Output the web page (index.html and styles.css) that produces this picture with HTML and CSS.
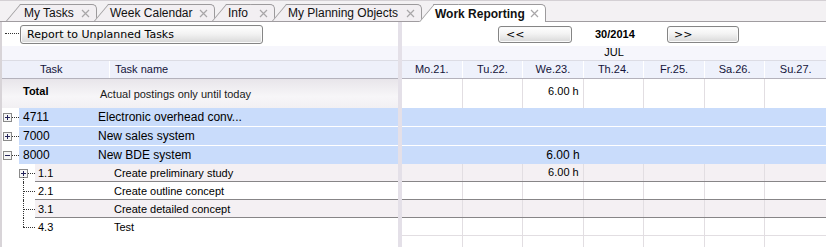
FILE: index.html
```html
<!DOCTYPE html>
<html lang="en">
<head>
    <meta charset="UTF-8">
    <title>Work Reporting</title>
    <link rel="stylesheet" href="styles.css">
</head>
<body>

<div class="tabs">
    <div class="tab tab-1">My Tasks <svg class="x" width="9" height="9" viewBox="0 0 9 9"><path d="M1 1l7 7M8 1l-7 7"/></svg></div>
    <div class="tab tab-2">Week Calendar <svg class="x" width="9" height="9" viewBox="0 0 9 9"><path d="M1 1l7 7M8 1l-7 7"/></svg></div>
    <div class="tab tab-3">Info <svg class="x" width="9" height="9" viewBox="0 0 9 9"><path d="M1 1l7 7M8 1l-7 7"/></svg></div>
    <div class="tab tab-4">My Planning Objects <svg class="x" width="9" height="9" viewBox="0 0 9 9"><path d="M1 1l7 7M8 1l-7 7"/></svg></div>
    <div class="tab tab-5 active">Work Reporting <svg class="x" width="9" height="9" viewBox="0 0 9 9"><path d="M1 1l7 7M8 1l-7 7"/></svg></div>
</div>

<div class="view">
    <!-- left: task tree -->
    <div class="pane-left">
        <div class="bar-row">
            <span class="dots-h"></span>
            <button class="btn btn-report">Report to Unplanned Tasks</button>
        </div>
        <div class="band"></div>
        <div class="head-row">
            <div class="hc hc-task">Task</div>
            <div class="hc hc-name">Task name</div>
        </div>
        <div class="total-row">
            <div class="tot-id">Total</div>
            <div class="tot-name">Actual postings only until today</div>
        </div>

        <div class="tops">
            <div class="trow">
                <div class="gutter">
                    <svg class="exp" width="9" height="9" viewBox="0 0 9 9"><rect x="0.5" y="0.5" width="8" height="8"/><path d="M2 4.5h5M4.5 2v5"/></svg>
                    <span class="dots"></span>
                </div>
                <div class="trow-body"><span class="t-id">4711</span><span>Electronic overhead conv...</span></div>
            </div>
            <div class="trow">
                <div class="gutter">
                    <svg class="exp" width="9" height="9" viewBox="0 0 9 9"><rect x="0.5" y="0.5" width="8" height="8"/><path d="M2 4.5h5M4.5 2v5"/></svg>
                    <span class="dots"></span>
                </div>
                <div class="trow-body"><span class="t-id">7000</span><span>New sales system</span></div>
            </div>
            <div class="trow">
                <div class="gutter">
                    <svg class="exp" width="9" height="9" viewBox="0 0 9 9"><rect x="0.5" y="0.5" width="8" height="8"/><path d="M2 4.5h5"/></svg>
                    <span class="dots"></span>
                </div>
                <div class="trow-body"><span class="t-id">8000</span><span>New BDE system</span></div>
            </div>
        </div>

        <div class="subs">
            <div class="srow first alt">
                <div class="sgutter">
                    <svg class="exp" width="9" height="9" viewBox="0 0 9 9"><rect x="0.5" y="0.5" width="8" height="8"/><path d="M2 4.5h5M4.5 2v5"/></svg>
                    <span class="dots"></span>
                </div>
                <div class="srow-body"><span class="s-id">1.1</span><span>Create preliminary study</span></div>
            </div>
            <div class="srow mid">
                <div class="sgutter"><span class="branch"></span></div>
                <div class="srow-body"><span class="s-id">2.1</span><span>Create outline concept</span></div>
            </div>
            <div class="srow mid alt">
                <div class="sgutter"><span class="branch"></span></div>
                <div class="srow-body"><span class="s-id">3.1</span><span>Create detailed concept</span></div>
            </div>
            <div class="srow last">
                <div class="sgutter"><span class="branch"></span></div>
                <div class="srow-body"><span class="s-id">4.3</span><span>Test</span></div>
            </div>
        </div>
    </div>

    <div class="splitter"></div>

    <!-- right: week grid -->
    <div class="pane-right">
        <div class="nav-row">
            <button class="btn nav-btn">&lt;&lt;</button>
            <div class="week">30/2014</div>
            <button class="btn nav-btn next">&gt;&gt;</button>
        </div>
        <div class="month-row">JUL</div>
        <div class="days day-head">
            <div>Mo.21.</div><div>Tu.22.</div><div>We.23.</div><div>Th.24.</div><div>Fr.25.</div><div>Sa.26.</div><div>Su.27.</div>
        </div>
        <div class="days day-total">
            <div></div><div></div><div class="hours">6.00 h</div><div></div><div></div><div></div><div></div>
        </div>
        <div class="blues">
            <div class="days day-blue"><div></div><div></div><div></div><div></div><div></div><div></div><div></div></div>
            <div class="days day-blue"><div></div><div></div><div></div><div></div><div></div><div></div><div></div></div>
            <div class="days day-blue"><div></div><div></div><div class="hours">6.00 h</div><div></div><div></div><div></div><div></div></div>
        </div>
        <div class="days day-sub alt"><div></div><div></div><div class="hours">6.00 h</div><div></div><div></div><div></div><div></div></div>
        <div class="days day-sub"><div></div><div></div><div></div><div></div><div></div><div></div><div></div></div>
        <div class="days day-sub alt"><div></div><div></div><div></div><div></div><div></div><div></div><div></div></div>
        <div class="days day-sub last"><div></div><div></div><div></div><div></div><div></div><div></div><div></div></div>
        <div class="days day-empty"><div></div><div></div><div></div><div></div><div></div><div></div><div></div></div>
    </div>
</div>

</body>
</html>
```

FILE: styles.css
```css
* {
    box-sizing: border-box;
}
body {
    margin: 0;
    width: 826px;
    height: 247px;
    overflow: hidden;
    background: #fff;
    font-family: "Liberation Sans", Arial, sans-serif;
    color: #000;
}

/* tab strip */
.tabs {
    display: flex;
    align-items: flex-end;
    height: 22px;
    padding-left: 20px;
    background: #f3f1f3;
    border-top: 1px solid #d4d0d4;
    border-bottom: 1px solid #a09ca0;
}
.tab {
    position: relative;
    z-index: 0;
    display: flex;
    align-items: center;
    height: 17px;
    margin-left: 11px;
    padding: 0 6px 0 2px;
    border-top: 1px solid #9c9a9c;
    border-right: 1px solid #9c9a9c;
    border-top-right-radius: 5px;
    background: #f2eff2;
    font-size: 12px;
    color: #111;
    white-space: nowrap;
}
.tab::before {
    content: "";
    position: absolute;
    z-index: -1;
    top: -1px;
    bottom: 0;
    left: -14px;
    width: 24px;
    border-left: 1px solid #9c9a9c;
    border-top: 1px solid #9c9a9c;
    background: inherit;
    transform: skewX(-40deg);
    transform-origin: 0 100%;
}
.tab-1 { width: 77px; margin-left: 0; padding-left: 4px; }
.tab-2 { width: 107px; }
.tab-3 { width: 49px; }
.tab-4 { width: 136px; }
.tab-5 { width: 113px; }
.tab.active {
    height: 18px;
    margin-bottom: -1px;
    background: #fff;
    font-weight: bold;
}
.tab .x {
    margin-left: auto;
    fill: none;
    stroke: #a8a6a8;
    stroke-width: 1.2;
}

/* panes */
.view {
    display: flex;
    height: 225px;
}
.pane-left {
    width: 398px;
    border-left: 2px solid #d8d4d8;
}
.splitter {
    width: 4px;
    background: #e4e0e8;
}
.pane-right {
    flex: 1;
    display: flex;
    flex-direction: column;
}

/* buttons */
.btn {
    font-family: "DejaVu Sans", Verdana, sans-serif;
    font-size: 11px;
    color: #000;
    text-align: left;
    border: 1px solid #858585;
    border-radius: 3px;
    background: linear-gradient(#ffffff, #f3f3f3 45%, #e2e2e2 80%, #d6d6d6);
    box-shadow: inset 0 0 0 1px #fafafa;
    padding: 0;
}

/* left pane rows */
.bar-row {
    display: flex;
    align-items: center;
    height: 24px;
    padding-left: 3px;
}
.dots-h {
    width: 14px;
    border-top: 1px dotted #333;
    margin-top: -1px;
}
.btn-report {
    width: 243px;
    height: 19px;
    margin-left: 1px;
    padding-left: 6px;
}
.band {
    height: 14px;
    background: #f6f6fc;
}
.head-row {
    display: flex;
    height: 19px;
    border-top: 1px solid #dcdce4;
    border-bottom: 1px solid #b4b2bc;
    background: #eef0fa;
    font-size: 11px;
    color: #14143a;
}
.hc {
    line-height: 17px;
}
.hc-task {
    width: 108px;
    padding-left: 38px;
    border-right: 1px solid #fff;
}
.hc-name {
    flex: 1;
    padding-left: 5px;
}
.total-row {
    display: flex;
    height: 29px;
    background: linear-gradient(#e8e5ea, #f7f6f8 60%, #f2f0f3);
    font-size: 11px;
    line-height: 13px;
}
.tot-id {
    width: 98px;
    padding: 6px 0 0 21px;
    font-weight: bold;
}
.tot-name {
    padding-top: 9px;
    color: #1a1a1a;
}

.trow {
    display: flex;
    height: 19px;
}
.tops .trow:last-child {
    height: 18px;
}
.gutter {
    display: flex;
    align-items: center;
    width: 17px;
    padding-left: 1px;
}
.dots {
    flex: 1;
    border-top: 1px dotted #333;
}
.exp {
    display: block;
    flex: none;
}
.exp rect {
    fill: #f6f6f6;
    stroke: #8a8a8a;
}
.exp path {
    stroke: #23235a;
}
.trow-body {
    flex: 1;
    display: flex;
    align-items: center;
    height: 18px;
    padding-left: 4px;
    background: #c9dcfb;
    font-size: 12px;
}
.t-id {
    width: 75px;
}

.srow {
    display: flex;
    height: 18px;
}
.sgutter {
    position: relative;
    display: flex;
    align-items: center;
    width: 33px;
    padding-left: 17px;
}
.sgutter::before {
    content: "";
    position: absolute;
    left: 21px;
    top: 0;
    bottom: 0;
    border-left: 1px dotted #333;
}
.srow.first .sgutter::before {
    top: 13px;
}
.srow.last .sgutter::before {
    bottom: 9px;
}
.branch {
    flex: 1;
    margin-left: 4px;
    border-top: 1px dotted #333;
}
.srow-body {
    flex: 1;
    display: flex;
    align-items: center;
    padding-left: 3px;
    border-bottom: 1px solid #878587;
    font-size: 11px;
}
.srow.alt .srow-body {
    background: #f4f0f3;
}
.srow.last .srow-body {
    border-bottom: none;
}
.s-id {
    width: 76px;
}

/* right pane rows */
.nav-row {
    display: flex;
    align-items: center;
    height: 24px;
    padding-left: 96px;
}
.nav-btn {
    width: 74px;
    height: 17px;
    padding-left: 7px;
}
.nav-btn.next {
    width: 72px;
    padding-left: 6px;
}
.week {
    width: 95px;
    padding-left: 23px;
    font-size: 11px;
    font-weight: bold;
}
.month-row {
    height: 14px;
    line-height: 12px;
    background: #f6f6fc;
    text-align: center;
    font-size: 11px;
}
.days {
    display: grid;
    grid-template-columns: repeat(7, 1fr);
    font-size: 11px;
}
.days > div {
    border-right: 1px solid #e2dee2;
}
.days > div:last-child {
    border-right: none;
}
.day-head {
    height: 19px;
    border-top: 1px solid #dcdce4;
    border-bottom: 1px solid #b4b2bc;
    background: #eef1fb;
    color: #14143a;
}
.day-head > div {
    line-height: 17px;
    text-align: center;
    border-right-color: #fff;
}
.day-total {
    height: 29px;
}
.hours {
    text-align: right;
    padding-right: 4px;
}
.day-total .hours {
    padding-top: 6px;
}
.day-blue {
    height: 19px;
    background: #c9dcfb;
    border-bottom: 1px solid #fff;
    font-size: 12px;
    line-height: 18px;
}
.day-blue > div {
    border-right: none;
}
.blues .day-blue:last-child {
    height: 18px;
    border-bottom: none;
}
.day-sub {
    height: 18px;
    border-bottom: 1px solid #878587;
    line-height: 17px;
}
.day-sub.alt {
    background: #f4f0f3;
}
.day-sub.last {
    border-bottom-color: #e2dee2;
}
.day-empty {
    flex: 1;
}
```
